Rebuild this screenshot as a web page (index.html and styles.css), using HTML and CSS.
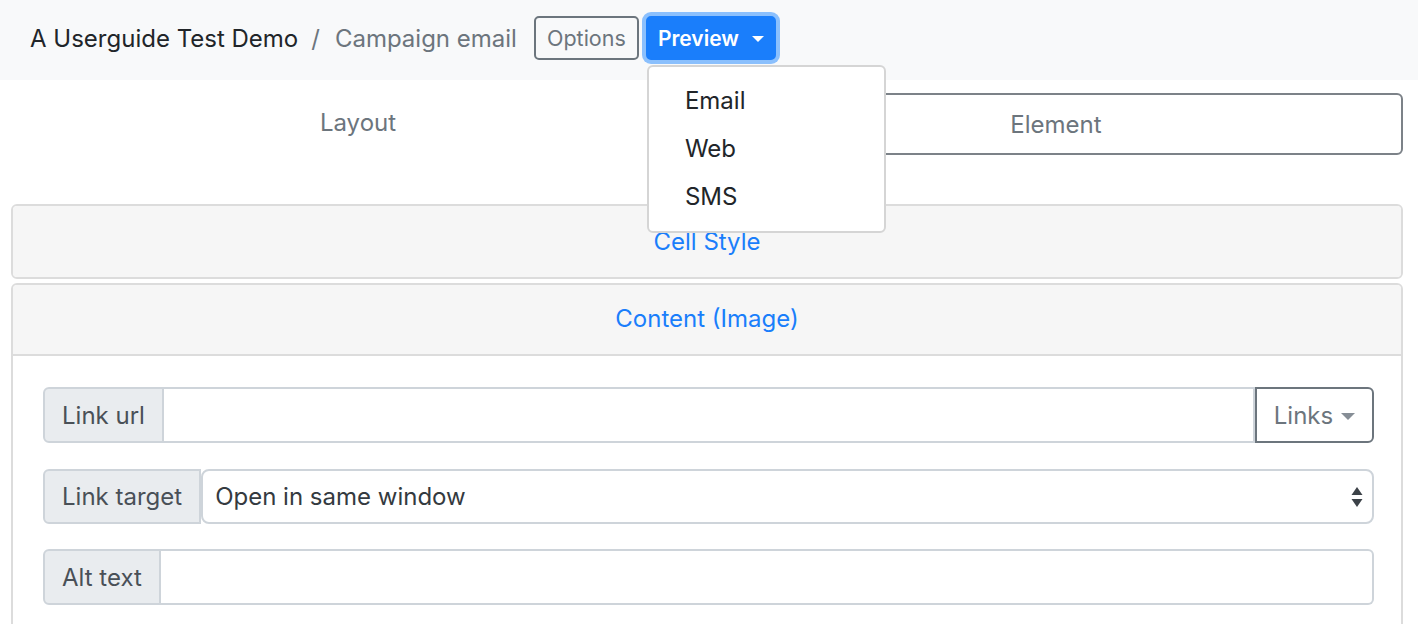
FILE: index.html
```html
<!DOCTYPE html>
<html>
<head>
<meta charset="utf-8">
<link rel="stylesheet" href="styles.css">
</head>
<body>
<nav class="navbar">
  <span class="crumb-main">A Userguide Test Demo</span>
  <span class="crumb-sep">/</span>
  <span class="crumb-sub">Campaign email</span>
  <button class="btn btn-options">Options</button>
  <div class="dropdown">
    <button class="btn btn-preview">Preview <span class="caret"></span></button>
    <div class="dropdown-menu">
      <div class="dropdown-item">Email</div>
      <div class="dropdown-item">Web</div>
      <div class="dropdown-item">SMS</div>
    </div>
  </div>
</nav>
<main class="page">
  <div class="tabs">
    <div class="tab">Layout</div>
    <div class="tab tab-active">Element</div>
  </div>
  <section class="card card-closed">
    <div class="card-header">Cell Style</div>
  </section>
  <section class="card">
    <div class="card-header card-header-open">Content (Image)</div>
    <div class="card-body">
      <div class="input-group">
        <span class="addon">Link url</span>
        <span class="field"></span>
        <button class="btn-links">Links <span class="caret caret-grey"></span></button>
      </div>
      <div class="input-group">
        <span class="addon">Link target</span>
        <span class="select">Open in same window
          <svg class="select-arrows" width="12" height="22" viewBox="0 0 12 22"><path d="M6 1 L11.5 9 H0.5 Z" fill="#3c4248"/><path d="M6 21 L11.5 13 H0.5 Z" fill="#3c4248"/></svg>
        </span>
      </div>
      <div class="input-group">
        <span class="addon">Alt text</span>
        <span class="field field-end"></span>
      </div>
    </div>
  </section>
</main>
</body>
</html>
```
FILE: styles.css
```css
* { box-sizing: border-box; }
body {
  margin: 0;
  font-family: Inter, "Noto Sans", "Liberation Sans", sans-serif;
  font-size: 24px;
  color: #212529;
  background: #fff;
}
.navbar {
  height: 80px;
  background: #f8f9fa;
  display: flex;
  align-items: center;
  padding-left: 30px;
  padding-bottom: 4px;
  position: relative;
  z-index: 5;
}
.crumb-main { color: #212529; }
.crumb-sep { color: #6c757d; padding: 0 15px 0 13px; }
.crumb-sub { color: #6c757d; margin-right: 17px; }
.btn {
  font-family: inherit;
  font-size: 21px;
  height: 44px;
  border-radius: 5px;
  cursor: pointer;
  display: inline-flex;
  align-items: center;
}
.btn-options {
  background: transparent;
  border: 2px solid #6c757d;
  color: #6c757d;
  padding: 0 12px;
  width: 105px;
  justify-content: center;
  font-size: 21.5px;
}
.dropdown { position: relative; margin-left: 7px; }
.btn-preview {
  background: #1a7efb;
  border: 2px solid #1a7efb;
  color: #fff;
  font-weight: 600;
  width: 130px;
  justify-content: center;
  gap: 13px;
  box-shadow: 0 0 0 4px #8bc0fd;
}
.caret {
  display: inline-block;
  width: 0; height: 0;
  border-left: 6px solid transparent;
  border-right: 6px solid transparent;
  border-top: 6px solid #fff;
  margin-top: 2px;
}
.caret-grey { border-top-color: #868e96; border-left-width: 7px; border-right-width: 7px; border-top-width: 7px; }
.dropdown-menu {
  position: absolute;
  left: 1px;
  top: 49px;
  width: 239px;
  background: #fff;
  border: 2px solid #d5d5d5;
  border-radius: 6px;
  padding: 10px 0;
}
.dropdown-item {
  height: 48px;
  line-height: 48px;
  padding-left: 36px;
  color: #212529;
}
.page { padding: 13px 15px 0 11px; }
.tabs {
  display: grid;
  grid-template-columns: 1fr 1fr;
  gap: 4px;
  height: 62px;
}
.tab {
  display: flex;
  align-items: center;
  justify-content: center;
  color: #6c757d;
  padding-bottom: 4px;
}
.tab-active {
  border: 2px solid #7c8288;
  border-radius: 6px;
  padding-bottom: 0;
  padding-top: 0;
}
.card {
  border: 2px solid #dcdcdc;
  border-radius: 6px;
  background: #fff;
  overflow: hidden;
}
.card-closed { margin-top: 49px; margin-bottom: 4px; }
.card-header {
  background: #f6f6f6;
  color: #1a7efb;
  text-align: center;
  height: 71px;
  line-height: 71px;
}
.card-header-open { border-bottom: 2px solid #dcdcdc; height: 71px; line-height: 67px; }
.card-body { padding: 31px 27px 40px 30px; }
.input-group {
  display: flex;
  height: 56px;
  margin-bottom: 26px;
  color: #495057;
}
.input-group:nth-child(2) { height: 55px; margin-bottom: 25px; }
.addon {
  background: #e9ecef;
  border: 2px solid #ced4da;
  border-radius: 6px 0 0 6px;
  display: flex;
  align-items: center;
  padding: 0 17px;
  white-space: nowrap;
}
.field {
  flex: 1;
  border: 2px solid #ced4da;
  border-left: none;
  background: #fff;
}
.field-end { border-radius: 0 6px 6px 0; }
.btn-links {
  font-family: inherit;
  font-size: 24px;
  color: #6c757d;
  background: #fff;
  border: 2px solid #6c757d;
  border-radius: 0 6px 6px 0;
  width: 119px;
  display: flex;
  align-items: center;
  justify-content: center;
  gap: 8px;
  padding: 0;
}
.select {
  flex: 1;
  border: 2px solid #ced4da;
  border-radius: 8px;
  background: #fff;
  display: flex;
  align-items: center;
  padding-left: 12px;
  padding-right: 9px;
  color: #343a40;
  justify-content: space-between;
}
.select-arrows { display: block; }
```
